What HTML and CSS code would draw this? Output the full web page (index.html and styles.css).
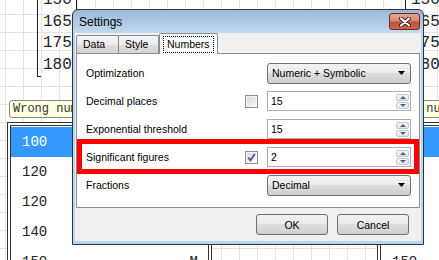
FILE: index.html
```html
<!DOCTYPE html>
<html lang="en">
<head>
  <meta charset="UTF-8" />
  <title>Settings</title>
  <link rel="stylesheet" href="styles.css">
</head>
<body>
  <div class="sheet">
    <!-- cards on the worksheet, behind the dialog -->
    <div class="card list-card list-a">
      <div>150</div><div>165</div><div>175</div><div>180</div>
    </div>
    <div class="card list-card list-b">
      <div>150</div><div>165</div><div>175</div><div>180</div>
    </div>

    <div class="card table-card table-a">
      <div class="note">Wrong number</div>
      <div class="rows">
        <div class="row sel"><span>100</span></div>
        <div class="row"><span>120</span></div>
        <div class="row"><span>120</span></div>
        <div class="row"><span>140</span></div>
        <div class="row"><span>150</span><span>M</span></div>
      </div>
    </div>
    <div class="card table-card table-b">
      <div class="note">Wrong number</div>
      <div class="rows">
        <div class="row sel"><span>100</span></div>
        <div class="row"><span>120</span></div>
        <div class="row"><span>120</span></div>
        <div class="row"><span>140</span></div>
        <div class="row"><span>150</span></div>
      </div>
    </div>

    <!-- Settings dialog -->
    <div class="dialog">
      <div class="titlebar">
        <span class="title">Settings</span>
        <span class="close">
          <svg width="12" height="10" viewBox="0 0 12 10">
            <path d="M2 1.5 L10 8.5 M10 1.5 L2 8.5" stroke="#4a1812" stroke-width="4" stroke-linecap="round"/>
            <path d="M2 1.5 L10 8.5 M10 1.5 L2 8.5" stroke="#fff" stroke-width="2.2" stroke-linecap="round"/>
          </svg>
        </span>
      </div>

      <div class="client">
        <div class="tabs">
          <div class="tab tab-data">Data</div>
          <div class="tab tab-style">Style</div>
          <div class="tab active"><span>Numbers</span></div>
        </div>

        <div class="page">
          <div class="field">
            <span class="label">Optimization</span>
            <span></span>
            <div class="combo">
              <span>Numeric + Symbolic</span>
              <svg width="8" height="4" viewBox="0 0 8 4"><polygon points="0,0 7,0 3.5,4" fill="#000"/></svg>
            </div>
          </div>

          <div class="field">
            <span class="label">Decimal places</span>
            <span class="check"></span>
            <div class="spin">
              <span class="value">15</span>
              <span class="spin-btns"><span class="up"><i></i></span><span class="down"><i></i></span></span>
            </div>
          </div>

          <div class="field">
            <span class="label">Exponential threshold</span>
            <span></span>
            <div class="spin">
              <span class="value">15</span>
              <span class="spin-btns"><span class="up"><i></i></span><span class="down"><i></i></span></span>
            </div>
          </div>

          <div class="field">
            <span class="label">Significant figures</span>
            <span class="check">
              <svg width="11" height="11" viewBox="0 0 11 11"><path d="M2.2 5.6 L4.5 8.2 L8.8 2" fill="none" stroke="#4a5e96" stroke-width="1.9"/></svg>
            </span>
            <div class="spin">
              <span class="value">2</span>
              <span class="spin-btns"><span class="up"><i></i></span><span class="down"><i></i></span></span>
            </div>
          </div>

          <div class="field">
            <span class="label">Fractions</span>
            <span></span>
            <div class="combo">
              <span>Decimal</span>
              <svg width="8" height="4" viewBox="0 0 8 4"><polygon points="0,0 7,0 3.5,4" fill="#000"/></svg>
            </div>
          </div>

          <!-- red annotation frame -->
          <div class="highlight"></div>
        </div>

        <div class="footer">
          <span class="btn">OK</span>
          <span class="btn">Cancel</span>
        </div>
      </div>
    </div>
  </div>
</body>
</html>
```

FILE: styles.css
```css
/* Worksheet background with grid */
body {
  margin: 0;
  width: 439px;
  height: 260px;
  overflow: hidden;
  background-color: #fff;
  background-image:
    linear-gradient(to right, #e3e3e3 1px, transparent 1px),
    linear-gradient(to bottom, #e3e3e3 1px, transparent 1px);
  background-size: 18px 18px;
  background-position: 5px 14px;
  font-family: "Liberation Sans", Arial, sans-serif;
}

.sheet {
  position: relative;
  width: 439px;
  height: 260px;
  overflow: hidden;
}

/* Cards placed on the free canvas */
.card {
  position: absolute;
}

.list-card {
  top: -10px;
  width: 40px;
  height: 87px;
  box-sizing: border-box;
  border-left: 1px solid #222;
  border-right: 1px solid #222;
  padding-left: 5px;
  font: 16px/21.5px "Liberation Mono", monospace;
  color: #222;
}
.list-card::after {
  content: "";
  position: absolute;
  left: 0;
  bottom: 0;
  width: 3px;
  height: 1px;
  background: #222;
}
.list-a { left: 37px; }
.list-b { left: 405px; }

.table-card {
  top: 100px;
  width: 205px;
}
.table-a { left: 7px; }
.table-b { left: 377px; }

.note {
  margin-left: 2px;
  height: 18px;
  box-sizing: border-box;
  border: 1px solid #8a8a7a;
  border-radius: 3px;
  background: #ffffe1;
  padding-left: 3px;
  font: 12px/16px "Liberation Mono", monospace;
  color: #333;
  white-space: nowrap;
  overflow: hidden;
}

.rows {
  margin-top: 4px;
  height: 200px;
  border: 4px double #333;
  padding-top: 1px;
  background: #fff;
}
.row {
  height: 30px;
  display: flex;
  align-items: center;
  justify-content: space-between;
  padding: 0 10px 0 11px;
  font: 14px "Liberation Mono", monospace;
  color: #222;
}
.row.sel {
  background: #3399ff;
  color: #fff;
}

/* Dialog window */
.dialog {
  position: absolute;
  left: 72px;
  top: 9px;
  width: 352px;
  height: 236px;
  box-sizing: border-box;
  border: 1px solid #2f343a;
  border-radius: 6px 6px 0 0;
  padding: 0 2px 3px 2px;
  background: linear-gradient(#9ab8d8, #c3daf0 23px, #b8d6ee 24px);
  display: flex;
  flex-direction: column;
  font-size: 10.5px;
  color: #000;
}

.titlebar {
  height: 23px;
  display: flex;
  align-items: center;
  padding-left: 4px;
}
.title {
  font-size: 12px;
  color: #000;
}
.close {
  margin-left: auto;
  margin-right: 1px;
  align-self: flex-start;
  margin-top: 3px;
  width: 31px;
  height: 17px;
  box-sizing: border-box;
  border: 1px solid #6b2a22;
  border-radius: 3px;
  background: linear-gradient(#e4a898, #d68672 45%, #c2503b 55%, #c9654f);
  display: flex;
  align-items: center;
  justify-content: center;
}

.client {
  flex: 1;
  background: #f0f0f0;
  display: flex;
  flex-direction: column;
}

/* Tabs */
.tabs {
  height: 20px;
  display: flex;
  align-items: flex-end;
  padding-left: 1px;
}
.tab {
  height: 18px;
  box-sizing: border-box;
  border: 1px solid #898c95;
  border-bottom: none;
  border-radius: 2px 2px 0 0;
  background: linear-gradient(#f4f4f4, #ececec 50%, #dfdfdf 50%, #d4d4d4);
  line-height: 16px;
  padding-left: 6px;
}
.tab-data { width: 43px; }
.tab-style { width: 41px; margin-left: -1px; }
.tab.active {
  position: relative;
  z-index: 1;
  width: 59px;
  height: 21px;
  margin-bottom: -1px;
  background: #fff;
  padding: 2px 0 0 3px;
}
.tab.active span {
  display: inline-block;
  height: 15px;
  line-height: 15px;
  padding: 0 3px;
  border: 1px dotted #000;
}

.page {
  position: relative;
  margin: 0 1px;
  height: 155px;
  box-sizing: border-box;
  border: 1px solid #898c95;
  background: #fff;
  padding: 5px 8px 0 9px;
}

.field {
  height: 28px;
  display: grid;
  grid-template-columns: 1fr 22px 144px;
  align-items: center;
}

.check {
  width: 13px;
  height: 13px;
  box-sizing: border-box;
  border: 1px solid #8e8f8f;
  background: linear-gradient(135deg, #d5d8dc, #f8f8f8);
  box-shadow: inset 0 0 0 1px #f4f4f4;
  display: flex;
  align-items: center;
  justify-content: center;
}

.combo {
  height: 21px;
  box-sizing: border-box;
  border: 1px solid #707070;
  border-radius: 3px;
  background: linear-gradient(#f2f2f2, #ebebeb 50%, #dddddd 50%, #cfcfcf);
  display: flex;
  align-items: center;
  justify-content: space-between;
  padding: 0 4px 0 4px;
}

.spin {
  height: 20px;
  box-sizing: border-box;
  border: 1px solid #abadb3;
  background: #fff;
  display: flex;
  align-items: center;
  justify-content: space-between;
  padding: 0 1px 0 3px;
}
.spin-btns {
  display: flex;
  flex-direction: column;
  gap: 1px;
  width: 13px;
}
.spin-btns span {
  height: 7px;
  box-sizing: border-box;
  border: 1px solid #c3c8d0;
  border-radius: 2px;
  background: linear-gradient(#f6f6f6, #e2e4e8);
  display: flex;
  align-items: center;
  justify-content: center;
}
.spin-btns i {
  width: 0;
  height: 0;
  border-left: 3px solid transparent;
  border-right: 3px solid transparent;
}
.up i { border-bottom: 3px solid #4d6185; }
.down i { border-top: 3px solid #4d6185; }

/* Red annotation frame over the "Significant figures" row */
.highlight {
  position: absolute;
  left: 0;
  top: 85px;
  width: 342px;
  height: 35px;
  box-sizing: border-box;
  border: 5px solid #ff0000;
}

.footer {
  flex: 1;
  display: flex;
  justify-content: flex-end;
  align-items: flex-start;
  gap: 9px;
  padding: 6px 12px 0 0;
}
.btn {
  width: 72px;
  height: 21px;
  box-sizing: border-box;
  border: 1px solid #707070;
  border-radius: 3px;
  background: linear-gradient(#f2f2f2, #ebebeb 50%, #dddddd 50%, #cfcfcf);
  display: flex;
  align-items: center;
  justify-content: center;
}
```
